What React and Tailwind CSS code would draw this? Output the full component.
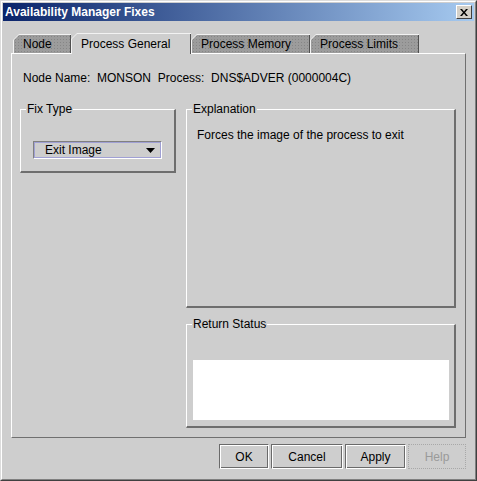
import React from "react";

// tabs of the fixes dialog
const tabs = [
  { label: "Node", w: "w-[58px]" },
  { label: "Process General", w: "w-[120px]", active: true },
  { label: "Process Memory", w: "w-[119px]" },
  { label: "Process Limits", w: "w-[109px]" },
];

const buttons = [
  { label: "OK", w: "w-[50px]" },
  { label: "Cancel", w: "w-[72px]" },
  { label: "Apply", w: "w-[61px]" },
  { label: "Help", w: "w-[58px]", disabled: true },
];

function Tab({ label, w, active }) {
  return (
    <div
      className={`${w} ${
        active ? "h-[21px] -mb-px relative z-10" : "h-[19px]"
      } bg-[#f2f2f2] pl-px pt-px [clip-path:polygon(6px_0,100%_0,100%_100%,0_100%,0_6px)]`}
    >
      <div
        className={`h-full flex items-center pl-[9px] border-r border-r-[#505050] ${
          active
            ? "bg-[#cecece]"
            : "bg-[#9c9c9c] bg-[radial-gradient(#868686_0.7px,transparent_0.9px)] bg-[length:3px_3px]"
        } [clip-path:polygon(5px_0,100%_0,100%_100%,0_100%,0_5px)]`}
      >
        {label}
      </div>
    </div>
  );
}

// مربع مجموعة بعنوان
function Group({ title, className, children }) {
  return (
    <fieldset
      className={`min-w-0 border border-t-white border-l-white border-r-2 border-b-2 border-r-[#6e6e6e] border-b-[#6e6e6e] ${className}`}
    >
      <legend className="ml-[5px] px-px leading-[14px]">{title}</legend>
      {children}
    </fieldset>
  );
}

export default function App() {
  return (
    <div className="w-[477px] h-[481px] border border-t-[#dcdcdc] border-l-[#dcdcdc] border-r-[#404040] border-b-[#404040] bg-[#cecece] font-['Liberation_Sans',Arial,sans-serif] text-[12px] leading-[14px] text-black">
      <div className="h-full border border-t-white border-l-white border-r-[#808080] border-b-[#808080] p-px flex flex-col">
        {/* title bar */}
        <div className="h-[18px] flex items-center justify-between pl-[2px] pr-[2px] bg-[linear-gradient(to_right,#0a246a,#a6caf0)]">
          <span className="text-white font-bold text-[12px]">Availability Manager Fixes</span>
          <div className="w-[16px] h-[14px] bg-[#d4d0c8] border border-t-white border-l-white border-r-[#404040] border-b-[#404040] flex items-center justify-center">
            <svg width="8" height="7" viewBox="0 0 8 7">
              <path d="M0 0h2l2 2.5L6 0h2L5 3.5 8 7H6L4 4.5 2 7H0l3-3.5z" fill="#000" />
            </svg>
          </div>
        </div>

        {/* tabs */}
        <div className="mt-[12px] mx-[8px] flex items-end pl-[2px] h-[20px]">
          {tabs.map((t) => (
            <Tab key={t.label} {...t} />
          ))}
        </div>

        <div className="mx-[8px] h-[385px] border border-t-white border-l-white border-r-[#707070] border-b-[#707070] pl-[8px] pt-[17px]">
          <div className="ml-[3px] whitespace-pre">
            Node Name:  MONSON  Process:  DNS$ADVER (0000004C)
          </div>

          <div className="mt-[17px] flex gap-[10px]">
            <Group title="Fix Type" className="w-[156px] h-[71px]">
              <div className="mt-[25px] ml-[12px] w-[129px] h-[18px] border border-t-[#808080] border-l-[#808080] border-r-white border-b-white">
                <div className="h-full border border-[#a0a0d4] flex items-center justify-between pl-[10px] pr-[5px]">
                  <span>Exit Image</span>
                  <svg width="9" height="5" viewBox="0 0 9 5">
                    <path d="M0 0h9L4.5 5z" fill="#000" />
                  </svg>
                </div>
              </div>
            </Group>

            <div className="flex flex-col gap-[9px]">
              <Group title="Explanation" className="w-[270px] h-[206px]">
                <div className="pt-[12px] pl-[10px]">Forces the image of the process to exit</div>
              </Group>
              <Group title="Return Status" className="w-[270px] h-[111px]">
                <div className="mt-[29px] ml-[6px] w-[256px] h-[60px] bg-white" />
              </Group>
            </div>
          </div>
        </div>

        {/* buttons */}
        <div className="mt-[6px] mr-[8px] flex justify-end gap-[2px]">
          {buttons.map((b) =>
            b.disabled ? (
              <div
                key={b.label}
                className={`${b.w} h-[25px] border border-dotted border-[#a8a8a8] text-[#9a9a9a] flex items-center justify-center`}
              >
                {b.label}
              </div>
            ) : (
              <div
                key={b.label}
                className={`${b.w} h-[25px] border border-t-[#6a6a6a] border-l-[#6a6a6a] border-r-white border-b-white shadow-[inset_1px_1px_0_white,inset_-1px_-1px_0_#6a6a6a] flex items-center justify-center`}
              >
                {b.label}
              </div>
            )
          )}
        </div>
      </div>
    </div>
  );
}
